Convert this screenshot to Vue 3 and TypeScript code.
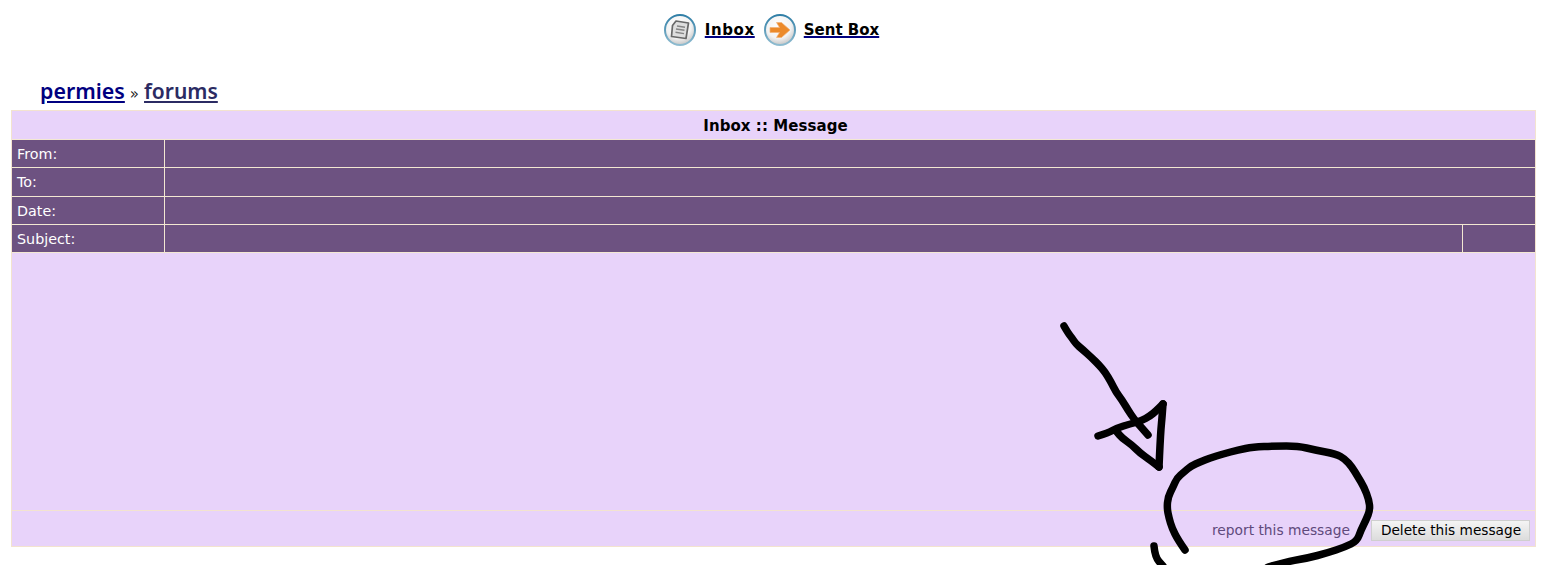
<script setup lang="ts">
type Pt = [number, number]

const rows: { label: string; extra?: boolean }[] = [
  { label: 'From:' },
  { label: 'To:' },
  { label: 'Date:' },
  { label: 'Subject:', extra: true },
]

function smooth(pts: Pt[]): string {
  let d = `M${pts[0][0]} ${pts[0][1]}`
  for (let i = 1; i < pts.length - 1; i++) {
    const mx = (pts[i][0] + pts[i + 1][0]) / 2
    const my = (pts[i][1] + pts[i + 1][1]) / 2
    d += ` Q${pts[i][0]} ${pts[i][1]} ${mx} ${my}`
  }
  const last = pts[pts.length - 1]
  return `${d} L${last[0]} ${last[1]}`
}

const strokes: string[] = [
  smooth([[1064, 326], [1068, 333], [1072, 338], [1076, 344], [1082, 349], [1092, 358], [1099, 365], [1105, 372], [1111, 382], [1116, 392], [1122, 400], [1128, 410], [1134, 419], [1141, 427], [1148, 435]]),
  smooth([[1098, 436], [1108, 433], [1117, 428], [1130, 424], [1141, 421], [1150, 416], [1156, 411], [1163, 404]]),
  smooth([[1163, 404], [1162, 418], [1161, 428], [1160, 445], [1159, 467]]),
  smooth([[1159, 467], [1150, 460], [1140, 453], [1132, 445], [1122, 438], [1117, 432]]),
  smooth([[1185, 550], [1178, 540], [1172, 528], [1169, 518], [1167, 508], [1168, 497], [1173, 487], [1177, 478], [1184, 472], [1191, 466], [1200, 462], [1210, 458], [1223, 454], [1238, 450], [1253, 447], [1275, 446], [1298, 446], [1315, 450], [1336, 454], [1345, 459], [1352, 467], [1358, 477], [1364, 487], [1369, 500], [1370, 510], [1366, 520], [1361, 530], [1357, 541], [1345, 547], [1327, 553], [1308, 558], [1290, 561], [1268, 567]]),
  smooth([[1154, 546], [1155, 557], [1163, 566]]),
]
</script>

<template>
  <div class="page">
    <nav class="mailboxes">
      <svg class="orb" viewBox="0 0 32 32" aria-hidden="true">
        <defs>
          <radialGradient id="orbFill" cx="45%" cy="35%" r="70%">
            <stop offset="0" stop-color="#ffffff" />
            <stop offset="0.6" stop-color="#f3f3f3" />
            <stop offset="1" stop-color="#bdbdbd" />
          </radialGradient>
          <linearGradient id="orbRing" x1="0" y1="0" x2="0" y2="1">
            <stop offset="0" stop-color="#2f7ea6" />
            <stop offset="1" stop-color="#8fbcd0" />
          </linearGradient>
        </defs>
        <circle cx="16" cy="16" r="15" fill="url(#orbFill)" stroke="url(#orbRing)" stroke-width="2" />
        <path d="M12 7 L24.5 9 L22 24.5 L7.5 22.5 L8.5 11.5 Z" fill="#dedede" stroke="#686868" stroke-width="1.7" stroke-linejoin="round" />
        <path d="M13 12 L21 13.3 M12 15 L20.5 16.3 M11.5 18.3 L20 19.6" stroke="#858585" stroke-width="1.4" fill="none" />
      </svg>
      <a class="boxlink inbox" href="#"><span>Inbox</span></a>
      <svg class="orb" viewBox="0 0 32 32" aria-hidden="true">
        <circle cx="16" cy="16" r="15" fill="url(#orbFill)" stroke="url(#orbRing)" stroke-width="2" />
        <path d="M6 13.5 H15.5 L12.5 8.5 H17.5 L26 16 L17.5 23.5 H12.5 L15.5 18.5 H6 Z" fill="#ec8a2a" stroke="#f0b27a" stroke-width="0.7" stroke-linejoin="round" />
      </svg>
      <a class="boxlink sent" href="#"><span>Sent Box</span></a>
    </nav>

    <div class="crumbs">
      <a class="crumb home" href="#">permies</a>
      <span class="sep">»</span>
      <a class="crumb forums" href="#">forums</a>
    </div>

    <section class="panel">
      <header class="title">Inbox :: Message</header>
      <div v-for="row in rows" :key="row.label" class="row">
        <div class="label">{{ row.label }}</div>
        <div class="value"></div>
        <div v-if="row.extra" class="tail"></div>
      </div>
      <div class="body"></div>
      <footer class="actions">
        <a class="report" href="#">report this message</a>
        <button class="delete" type="button">Delete this message</button>
      </footer>
    </section>

    <svg class="scribble" viewBox="0 0 1543 565" aria-hidden="true">
      <g fill="none" stroke="#000" stroke-width="7.5" stroke-linecap="round" stroke-linejoin="round">
        <path v-for="(d, i) in strokes" :key="i" :d="d" />
      </g>
    </svg>
  </div>
</template>

<style scoped>
.page {
  position: relative;
  width: 1543px;
  height: 565px;
  overflow: hidden;
  background: #fff;
  font-family: "DejaVu Sans", Verdana, sans-serif;
  font-size: 14px;
}
.mailboxes {
  display: flex;
  justify-content: center;
  align-items: center;
  height: 32px;
  padding-top: 14px;
}
.orb {
  width: 32px;
  height: 32px;
  flex: none;
}
.boxlink {
  font-size: 15px;
  font-weight: 700;
  color: #000080;
  text-decoration: underline;
  text-decoration-thickness: 2px;
}
.boxlink span {
  color: #000;
}
.inbox {
  width: 50px;
  margin: 0 9px;
  letter-spacing: 0.6px;
}
.sent {
  margin-left: 8px;
}
.crumbs {
  display: flex;
  align-items: baseline;
  gap: 5px;
  height: 36px;
  margin-top: 28px;
  padding: 1px 0 3px 40px;
  box-sizing: border-box;
  line-height: 32px;
}
.crumb {
  font-family: "Noto Sans", sans-serif;
  font-size: 21.4px;
  font-weight: 600;
  text-decoration: underline;
}
.home {
  color: #000080;
}
.forums {
  color: #2b2b63;
  font-size: 21px;
}
.sep {
  font-size: 15px;
  color: #222;
}
.panel {
  margin: 0 7px 0 11px;
  border: 1px solid #f3e3cf;
  background: #e8d3fa;
}
.title {
  height: 28px;
  padding-left: 4px;
  line-height: 31px;
  text-align: center;
  font-size: 15px;
  letter-spacing: 0.07px;
  font-weight: 700;
  color: #000;
}
.row {
  display: flex;
  height: 27.25px;
  border-top: 1px solid #f3e8d2;
  background: #6d5281;
  color: #fff;
}
.label {
  width: 147px;
  padding-left: 5px;
  line-height: 29px;
  font-size: 14.3px;
  border-right: 1px solid #f3e8d2;
}
.value {
  flex: 1;
}
.tail {
  width: 72px;
  border-left: 1px solid #f3e8d2;
}
.body {
  height: 257px;
  border-top: 1px solid #f3e8d2;
}
.actions {
  display: flex;
  justify-content: flex-end;
  align-items: center;
  gap: 21px;
  height: 32px;
  padding: 3px 5px 0 0;
  border-top: 1px solid #f3e3cf;
}
.report {
  color: #5f4a7c;
  font-size: 13.8px;
  text-decoration: none;
}
.delete {
  width: 159px;
  height: 21px;
  padding: 0 0 0 1px;
  border: 1px solid #cfcfcf;
  background: linear-gradient(#f4f4f4, #dcdcdc);
  color: #000;
  font-family: "DejaVu Sans", Verdana, sans-serif;
  font-size: 13.7px;
}
.scribble {
  position: absolute;
  inset: 0;
  width: 1543px;
  height: 565px;
  pointer-events: none;
}
</style>
